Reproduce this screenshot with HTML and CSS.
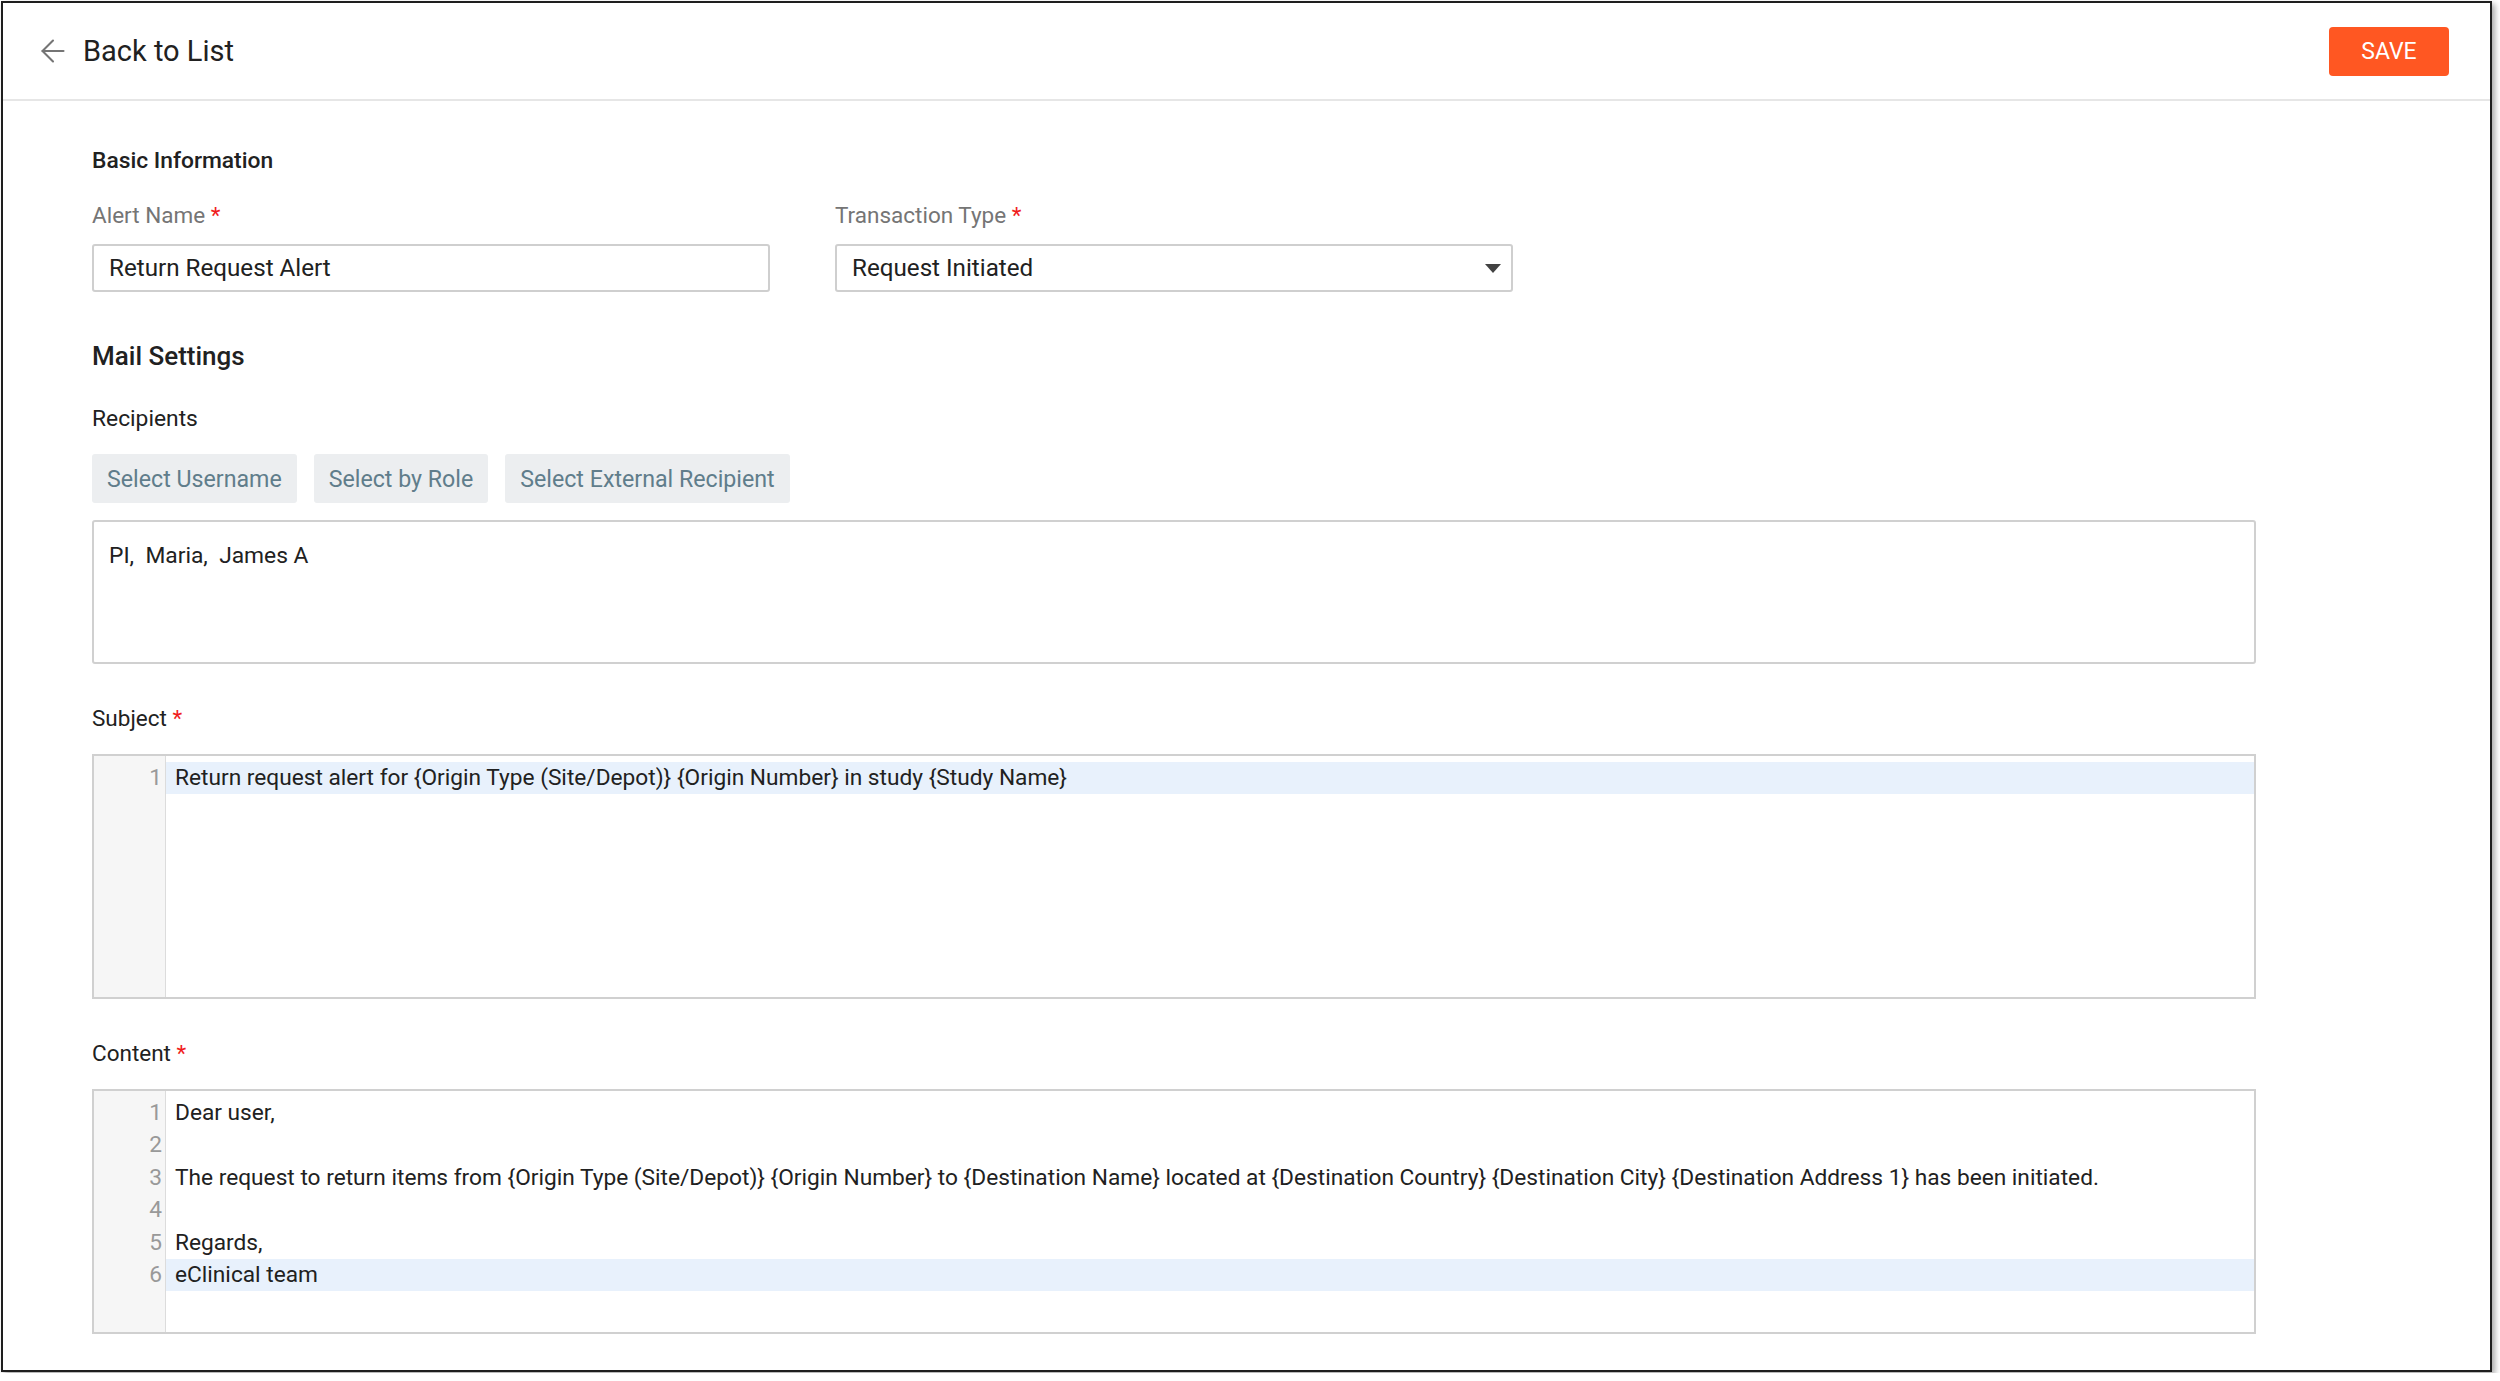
FILE: index.html
```html
<!DOCTYPE html>
<html lang="en">
<head>
    <meta charset="UTF-8">
    <meta name="viewport" content="width=device-width, initial-scale=1.0">
    <title>Edit Alert</title>
    <link rel="stylesheet" href="styles.css">
</head>

<body>
    <div class="frame">
        <header class="topbar">
            <a class="back-link" href="#">
                <svg class="back-icon" viewBox="0 0 24 24" width="36" height="36" fill="none" stroke="#757575" stroke-width="1.4" stroke-linecap="round" stroke-linejoin="round">
                    <line x1="19" y1="12" x2="5" y2="12"></line>
                    <polyline points="12 19 5 12 12 5"></polyline>
                </svg>
                <span>Back to List</span>
            </a>
            <button class="btn-save">SAVE</button>
        </header>

        <main class="form">
            <h3 class="section-title">Basic Information</h3>
            <div class="row">
                <div class="field">
                    <label class="field-label">Alert Name <span class="req">*</span></label>
                    <div class="input">Return Request Alert</div>
                </div>
                <div class="field">
                    <label class="field-label">Transaction Type <span class="req">*</span></label>
                    <div class="input select">
                        <span>Request Initiated</span>
                        <span class="caret"></span>
                    </div>
                </div>
            </div>

            <h3 class="section-title big">Mail Settings</h3>
            <div class="sub-label">Recipients</div>
            <div class="picker-buttons">
                <button class="btn-light">Select Username</button>
                <button class="btn-light">Select by Role</button>
                <button class="btn-light">Select External Recipient</button>
            </div>
            <div class="recipients-box">PI,&nbsp; Maria,&nbsp; James A</div>

            <label class="field-label dark gap">Subject <span class="req">*</span></label>
            <div class="editor">
                <div class="gutter">
                    <div>1</div>
                </div>
                <div class="lines">
                    <div class="line active">Return request alert for {Origin Type (Site/Depot)} {Origin Number} in study {Study Name}</div>
                </div>
            </div>

            <label class="field-label dark gap">Content <span class="req">*</span></label>
            <div class="editor">
                <div class="gutter">
                    <div>1</div>
                    <div>2</div>
                    <div>3</div>
                    <div>4</div>
                    <div>5</div>
                    <div>6</div>
                </div>
                <div class="lines">
                    <div class="line">Dear user,</div>
                    <div class="line"></div>
                    <div class="line">The request to return items from {Origin Type (Site/Depot)} {Origin Number} to {Destination Name} located at {Destination Country} {Destination City} {Destination Address 1} has been initiated.</div>
                    <div class="line"></div>
                    <div class="line">Regards,</div>
                    <div class="line active">eClinical team</div>
                </div>
            </div>
        </main>
    </div>
</body>
</html>
```

FILE: styles.css
```css
body {
    margin: 0;
    padding: 1px;
    background-color: #fff;
    font-family: 'Roboto', 'Liberation Sans', sans-serif;
    color: #212121;
}

.frame {
    box-sizing: border-box;
    width: 2491px;
    height: 1371px;
    border: 2px solid #1e1e1e;
    box-shadow: 3px 3px 6px rgba(0, 0, 0, 0.35);
    background-color: #fff;
}

.topbar {
    height: 96px;
    display: flex;
    align-items: center;
    justify-content: space-between;
    padding: 0 41px 0 32px;
    border-bottom: 2px solid #e6e6e6;
}

.back-link {
    display: flex;
    align-items: center;
    gap: 12px;
    text-decoration: none;
    color: #212121;
    font-size: 29px;
}

.btn-save {
    width: 120px;
    height: 49px;
    border: none;
    border-radius: 4px;
    background-color: #ff5722;
    color: #fff;
    font-family: inherit;
    font-size: 23px;
    cursor: pointer;
}

.form {
    width: 2164px;
    padding: 46px 0 0 89px;
}

.section-title {
    margin: 0;
    font-size: 22.8px;
    line-height: 28px;
    font-weight: 500;
}

.section-title.big {
    margin-top: 48px;
    font-size: 26px;
    line-height: 32px;
}

.row {
    display: grid;
    grid-template-columns: 678px 678px;
    column-gap: 65px;
    margin-top: 26px;
}

.field-label {
    display: block;
    font-size: 22.5px;
    line-height: 28px;
    color: #757575;
}

.field-label.dark {
    color: #212121;
}

.field-label.gap {
    margin-top: 40px;
}

.req {
    color: #f01d1d;
}

.input {
    box-sizing: border-box;
    height: 48px;
    margin-top: 15px;
    padding: 0 16px 0 15px;
    border: 2px solid #cfcfcf;
    border-radius: 3px;
    display: flex;
    align-items: center;
    font-size: 24.2px;
    line-height: 28px;
}

.input.select {
    justify-content: space-between;
    padding-right: 10px;
}

.caret {
    width: 0;
    height: 0;
    border-left: 8px solid transparent;
    border-right: 8px solid transparent;
    border-top: 9px solid #424242;
}

.sub-label {
    margin-top: 33px;
    font-size: 22.8px;
    line-height: 28px;
}

.picker-buttons {
    display: flex;
    gap: 17px;
    margin-top: 21px;
}

.btn-light {
    height: 49px;
    padding: 0 15px;
    border: none;
    border-radius: 3px;
    background-color: #eceef0;
    color: #607d8b;
    font-family: inherit;
    font-size: 23.2px;
}

.recipients-box {
    box-sizing: border-box;
    height: 144px;
    margin-top: 17px;
    padding: 20px 15px;
    border: 2px solid #d0d0d0;
    border-radius: 3px;
    font-size: 22.8px;
    line-height: 28px;
}

.editor {
    box-sizing: border-box;
    height: 245px;
    margin-top: 22px;
    display: flex;
    border: 2px solid #d0d0d0;
    font-size: 22.7px;
}

.gutter {
    width: 72px;
    padding: 6px 3px 0 0;
    box-sizing: border-box;
    background-color: #f6f6f6;
    border-right: 1px solid #dcdcdc;
    text-align: right;
    color: #999;
    line-height: 32.4px;
}

.lines {
    flex: 1;
    padding-top: 6px;
    line-height: 32.4px;
}

.line {
    height: 32.4px;
    padding-left: 9px;
    white-space: nowrap;
}

.line.active {
    background-color: #e8f1fc;
}
```
